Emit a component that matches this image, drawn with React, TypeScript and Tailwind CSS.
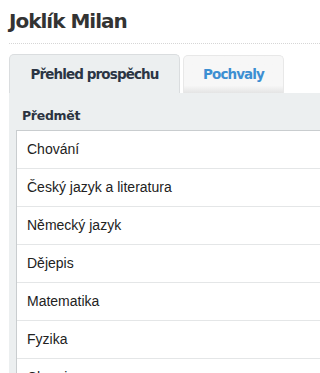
import React from 'react'

const SUBJECTS = ['Chování', 'Český jazyk a literatura', 'Německý jazyk', 'Dějepis', 'Matematika', 'Fyzika', 'Chemie']

export default function App() {
  return (
    <div className="min-h-screen bg-white pl-[9px] overflow-hidden">
      {/* Header */}
      <h1 className="pt-[9px] pb-[9px] border-b border-dotted border-[#d6d6d6] text-[20px] leading-[25px] font-bold text-[#333333] tracking-[-1px] [font-family:'DejaVu_Sans',Verdana,sans-serif]">
        Joklík Milan
      </h1>

      {/* Tabs */}
      <div className="mt-[10px] flex items-end gap-[3px] h-[39px] [font-family:'DejaVu_Sans',Verdana,sans-serif]">
        <div className="w-[171px] h-[39px] flex items-center justify-center rounded-t-[5px] border border-b-0 border-[#dadddf] bg-[#eceff0] text-[13.5px] font-bold tracking-[-0.9px] text-[#2b3544]">
          Přehled prospěchu
        </div>
        <div className="w-[101px] h-[38px] flex items-center justify-center rounded-t-[5px] border border-b-0 border-[#e8e8e8] bg-gradient-to-b from-[#f7f7f7] from-80% to-[#e4e4e4] text-[13.5px] font-bold tracking-[-0.9px] text-[#3d8fd2]">
          Pochvaly
        </div>
      </div>

      {/* Panel */}
      <div className="bg-[#eceff0] pl-[7px] pt-[15px]">
        <div className="pl-[6px] pb-[7px] text-[12.5px] leading-[15px] font-bold tracking-[-0.3px] text-[#2b3340] [font-family:'DejaVu_Sans',Verdana,sans-serif]">
          Předmět
        </div>
        <div className="bg-white border-l border-t border-[#c9cdcf] [font-family:'Liberation_Sans',Arial,sans-serif]">
          {SUBJECTS.map((s) => (
            <div key={s} className="h-[38px] flex items-center pl-[10px] border-b border-[#e4e6e7] text-[14px] text-[#222222]">
              {s}
            </div>
          ))}
        </div>
      </div>
    </div>
  )
}
